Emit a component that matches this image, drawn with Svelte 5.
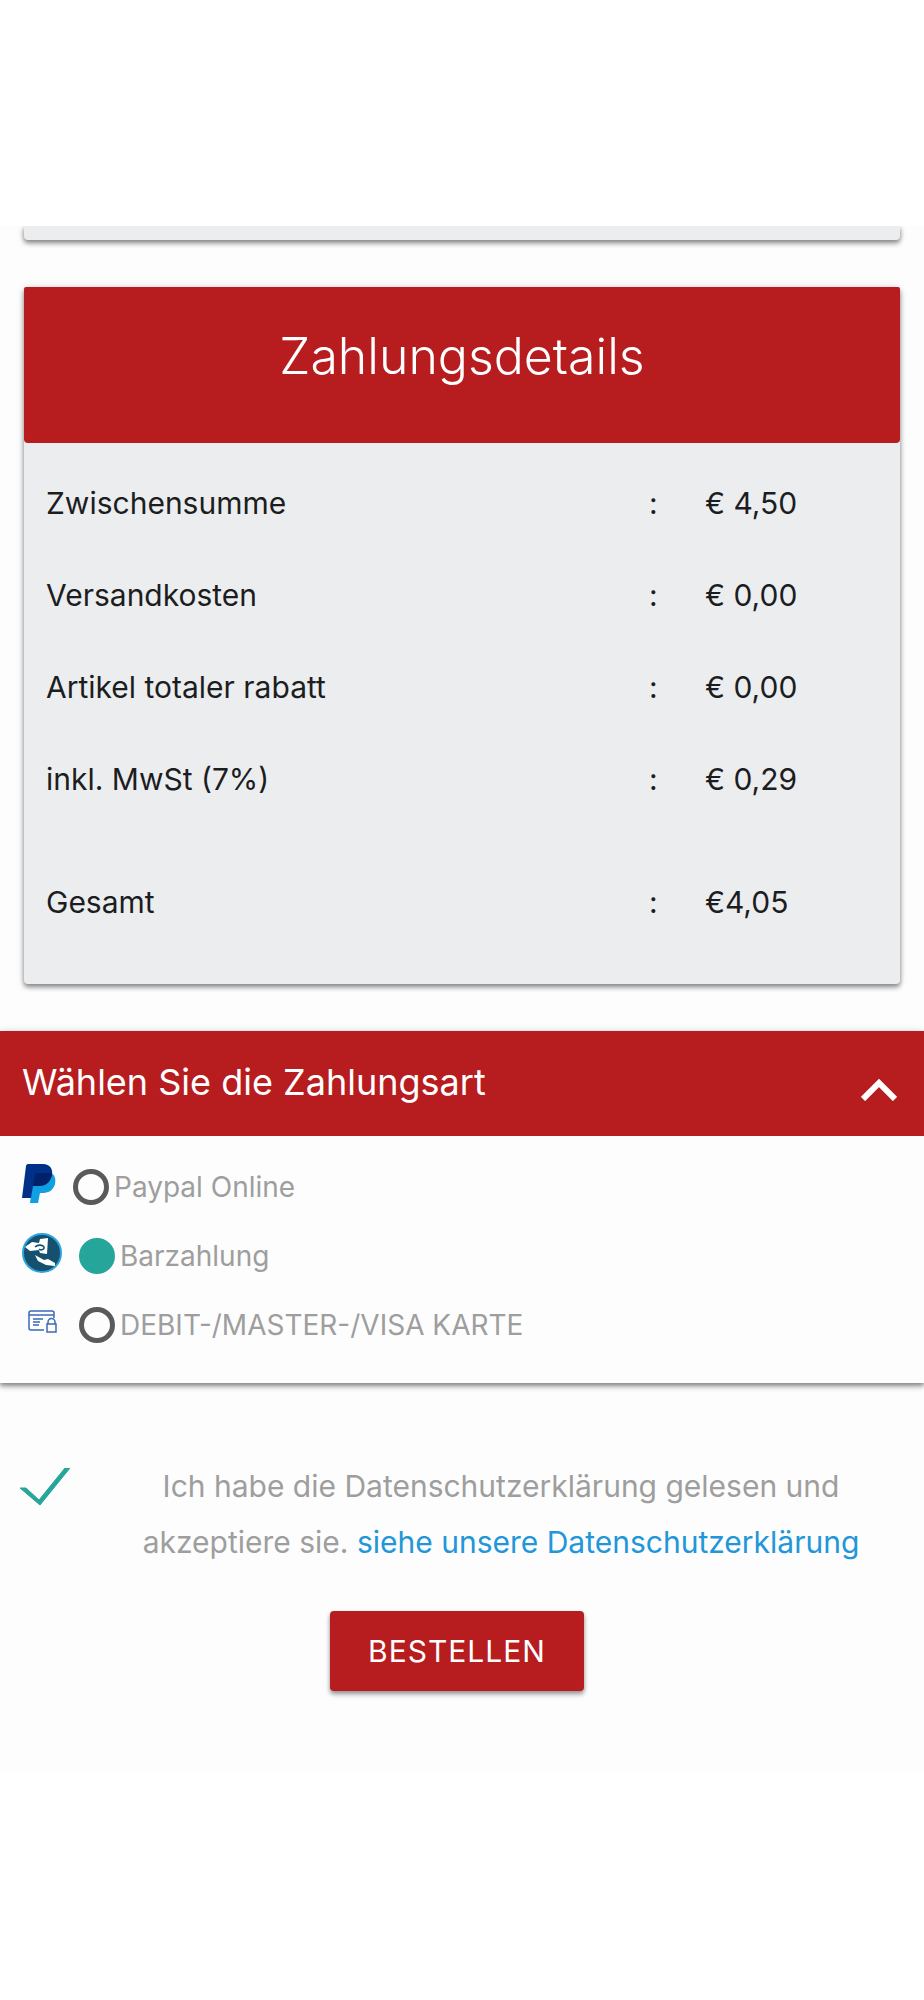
<script lang="ts">
    type Cost = { label: string; amount: string; total?: boolean };

    const costs: Cost[] = [
        { label: 'Zwischensumme', amount: '€ 4,50' },
        { label: 'Versandkosten', amount: '€ 0,00' },
        { label: 'Artikel totaler rabatt', amount: '€ 0,00' },
        { label: 'inkl. MwSt (7%)', amount: '€ 0,29' },
        { label: 'Gesamt', amount: '€4,05', total: true },
    ];

    const methods = [
        { id: 'paypal', label: 'Paypal Online' },
        { id: 'cash', label: 'Barzahlung' },
        { id: 'card', label: 'DEBIT-/MASTER-/VISA KARTE' },
    ];

    let open = $state(true);
    let selected = $state('cash');
    let accepted = $state(true);
</script>

<main>
    <div class="viewport">
        <div class="card previous"></div>

        <section class="card">
            <h1>Zahlungsdetails</h1>
            <table>
                <tbody>
                    {#each costs as cost}
                        <tr class:total={cost.total}>
                            <th scope="row">{cost.label}</th>
                            <td class="colon">:</td>
                            <td class="amount">{cost.amount}</td>
                        </tr>
                    {/each}
                </tbody>
            </table>
        </section>

        <section class="payment">
            <button class="toggle" aria-expanded={open} onclick={() => (open = !open)}>
                <span>Wählen Sie die Zahlungsart</span>
                <svg class="chevron" class:closed={!open} viewBox="0 0 36 22" aria-hidden="true">
                    <path d="M2 20 18 4 34 20" />
                </svg>
            </button>

            {#if open}
                <div class="methods">
                    {#each methods as method}
                        <label class="method">
                            {#if method.id === 'paypal'}
                                <svg class="logo narrow" viewBox="0 0 34 40" aria-hidden="true">
                                    <path fill="#109fe0" d="M29 9c4 2 5 6 4 11-2 7-7 9-13 9h-2l-2 10H8l4-29z" />
                                    <path fill="#003087" d="M6 0h15c7 0 10 5 9 11-2 8-7 11-14 11h-5L9 34H0L4 2c0-1 1-2 2-2z" />
                                    <path fill="#012169" d="M14 9h15q1 1 1 2c-2 8-7 11-14 11h-5l2-12z" />
                                </svg>
                            {:else if method.id === 'cash'}
                                <svg class="logo" viewBox="0 0 40 40" aria-hidden="true">
                                    <circle cx="20" cy="20" r="19" fill="#15506f" stroke="#2ba3dc" stroke-width="2" />
                                    <path fill="#fff" d="m18 6 8-1-1 16-7-1-1-3-9 1-5-4 7-5 7 1z" />
                                    <path fill="#fff" d="m13 22 9 5 4-1 7 4v3l-9-1-8-4z" />
                                    <path fill="none" stroke="#15506f" stroke-width="1.6" d="M13 14c3-3 8-2 9 0s-3 4-5 2" />
                                </svg>
                            {:else}
                                <svg class="logo" viewBox="0 0 40 40" aria-hidden="true">
                                    <g fill="none" stroke="#3b68b8" stroke-width="1.5">
                                        <path d="M22 28H9q-2 0-2-2V11q0-2 2-2h21q2 0 2 2v5M7 13h25M11 17h10M11 20h7M11 23h6" />
                                        <path d="M25 22h9v8h-9zM26 22v-2a3 3 0 0 1 7 0v2" />
                                    </g>
                                </svg>
                            {/if}
                            <input type="radio" name="method" value={method.id} bind:group={selected} />
                            <span>{method.label}</span>
                        </label>
                    {/each}
                </div>
            {/if}
        </section>

        <div class="consent">
            <input id="privacy" type="checkbox" bind:checked={accepted} />
            <svg class="tick" viewBox="0 0 50 38" aria-hidden="true">
                {#if accepted}
                    <path d="M0 20h6l13 12L45 0h5L20 37z" />
                {/if}
            </svg>
            <label class="terms" for="privacy">
                Ich habe die Datenschutzerklärung gelesen und akzeptiere sie.
                <a href="#datenschutz">siehe unsere Datenschutzerklärung</a>
            </label>
        </div>

        <button class="order">BESTELLEN</button>
    </div>
</main>

<style>
    :global(body) {
        background: #fff;
    }

    main {
        padding: 226px 0;
        font-family: Inter, "Liberation Sans", sans-serif;
        font-size: 30px;
        color: #1c1d1f;
    }

    .viewport {
        display: flex;
        flex-direction: column;
        overflow: hidden;
        background: #fdfdfd;
        padding-bottom: 82px;
    }

    .card {
        margin: 0 24px 47px;
        background: #ecedef;
        border-radius: 4px;
        box-shadow: 0 4px 5px rgba(0, 0, 0, 0.2), 0 2px 4px rgba(0, 0, 0, 0.3), 0 1px 10px rgba(0, 0, 0, 0.12);
    }

    .previous {
        height: 14px;
        border-radius: 0 0 4px 4px;
    }

    h1 {
        margin: 0;
        padding: 35px 24px 53px;
        background: #b71c1f;
        border-radius: 2px 2px 4px 4px;
        color: #fff;
        font-size: 50px;
        font-weight: 300;
        line-height: 68px;
        text-align: center;
    }

    table {
        width: 100%;
        padding-bottom: 50px;
        border-spacing: 0;
        table-layout: fixed;
        line-height: 32px;
    }

    th,
    td {
        padding: 44px 0 16px;
        font-weight: 400;
        text-align: left;
    }

    th {
        padding-left: 22px;
    }

    .colon {
        width: 56px;
    }

    .amount {
        width: 195px;
    }

    .total > * {
        padding-top: 75px;
    }

    .payment {
        box-shadow: 0 4px 5px rgba(0, 0, 0, 0.2), 0 2px 4px rgba(0, 0, 0, 0.3), 0 1px 10px rgba(0, 0, 0, 0.12);
    }

    .toggle {
        display: flex;
        align-items: center;
        justify-content: space-between;
        width: 100%;
        height: 105px;
        padding: 0 27px 4px 22px;
        border: 0;
        background: #b71c1f;
        color: #fff;
        font: inherit;
        font-size: 36px;
    }

    .chevron {
        width: 36px;
        height: 22px;
        margin-top: 16px;
        fill: none;
        stroke: #fff;
        stroke-width: 6;
    }

    .closed {
        transform: rotate(180deg);
    }

    .methods {
        padding: 16px 22px 24px;
    }

    .method {
        display: flex;
        align-items: center;
        height: 69px;
        color: #9e9e9e;
        font-size: 28px;
    }

    .logo {
        width: 40px;
        height: 40px;
        margin: 0 17px 6px 0;
    }

    .narrow {
        width: 34px;
    }

    .method input {
        appearance: none;
        width: 36px;
        height: 36px;
        margin: 0 5px 0 0;
        border: 5px solid #5a5a5a;
        border-radius: 50%;
    }

    .method input:checked {
        border-color: #26a69a;
        background: #26a69a;
    }

    .consent {
        display: flex;
        align-items: flex-start;
        padding: 75px 34px 0 20px;
        color: #9e9e9e;
        line-height: 56px;
    }

    .consent input {
        position: absolute;
        opacity: 0;
    }

    .tick {
        flex: none;
        width: 50px;
        height: 38px;
        margin-top: 10px;
        fill: #26a69a;
        stroke: #26a69a;
    }

    .terms {
        flex: 1;
        margin-left: 42px;
        text-align: center;
    }

    a {
        color: #2196d8;
        text-decoration: none;
    }

    .order {
        align-self: center;
        height: 80px;
        margin: 41px 10px 0 0;
        padding: 0 38px;
        border: 0;
        border-radius: 4px;
        background: #b71c1f;
        box-shadow: 0 4px 5px rgba(0, 0, 0, 0.2), 0 2px 4px rgba(0, 0, 0, 0.3);
        color: #fff;
        font: inherit;
        letter-spacing: 1px;
    }
</style>
